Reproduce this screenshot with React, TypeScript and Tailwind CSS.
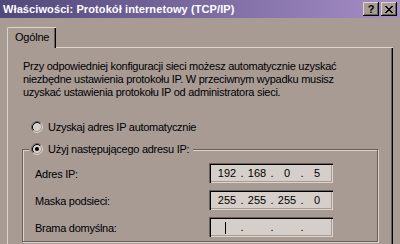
import React from "react";

const FONT = { fontFamily: '"Liberation Sans", Arial, sans-serif' };

function Radio({ checked }: { checked?: boolean }) {
  return (
    <svg width="12" height="12" viewBox="0 0 12 12" className="shrink-0">
      <circle cx="6" cy="6" r="4.5" fill="#d6cec8" />
      <path d="M2.11 9.89 A5.5 5.5 0 0 1 9.89 2.11" stroke="#6b5f59" strokeWidth="1" fill="none" />
      <path d="M9.89 2.11 A5.5 5.5 0 0 1 2.11 9.89" stroke="#dcd4ce" strokeWidth="1" fill="none" />
      <path d="M2.82 9.18 A4.5 4.5 0 0 1 9.18 2.82" stroke="#000" strokeWidth="1" fill="none" />
      <path d="M9.18 2.82 A4.5 4.5 0 0 1 2.82 9.18" stroke="#a89b94" strokeWidth="1" fill="none" />
      {checked && <circle cx="6" cy="6" r="2" fill="#000" />}
    </svg>
  );
}

function IpField({ parts, caret }: { parts: string[]; caret?: boolean }) {
  return (
    <div className="w-[124px] h-[20px] bg-[#d6cec8] shadow-[inset_1px_1px_0_#6b5f59,inset_2px_2px_0_#000,inset_-1px_-1px_0_#dcd4ce,inset_-2px_-2px_0_#a89b94] flex items-center pl-[6px] text-[11px] leading-[13px] text-black pt-[1px] tracking-normal">
      {parts.map((p, i) => (
        <React.Fragment key={i}>
          <span className="w-[24px] text-center">
            {caret && i === 0 ? <span className="inline-block w-px h-[12px] bg-black align-middle ml-[-4px]" /> : p}
          </span>
          {i < 3 && <span className="w-[6px] text-center">.</span>}
        </React.Fragment>
      ))}
    </div>
  );
}

export default function App() {
  return (
    <div className="w-[400px] h-[244px] overflow-hidden bg-[#a89b94] text-black" style={FONT}>
      {/* pasek tytułu */}
      <div className="h-[18px] flex items-center pl-[3px] pr-[3px] bg-gradient-to-r from-[#51487a] to-[#a68ec6]">
        <span className="text-white font-bold text-[11px] leading-[13px] tracking-[0.1px] whitespace-nowrap">
          Właściwości: Protokół internetowy (TCP/IP)
        </span>
        <div className="ml-auto flex gap-[2px]">
          <div className="w-[16px] h-[14px] bg-[#a89b94] shadow-[inset_-1px_-1px_0_#000,inset_1px_1px_0_#dcd4ce,inset_-2px_-2px_0_#6b5f59] flex items-center justify-center text-[11px] font-bold leading-none">
            ?
          </div>
          <div className="w-[16px] h-[14px] bg-[#a89b94] shadow-[inset_-1px_-1px_0_#000,inset_1px_1px_0_#dcd4ce,inset_-2px_-2px_0_#6b5f59] flex items-center justify-center">
            <svg width="8" height="7" viewBox="0 0 8 7" shapeRendering="crispEdges">
              <path d="M0 0h2v1h-2zM6 0h2v1h-2zM1 1h2v1h-2zM5 1h2v1h-2zM2 2h4v1h-4zM3 3h2v1h-2zM2 4h4v1h-4zM1 5h2v1h-2zM5 5h2v1h-2zM0 6h2v1h-2zM6 6h2v1h-2z" fill="#000" />
            </svg>
          </div>
        </div>
      </div>

      <div className="pl-[7px] pr-[7px] pt-[9px]">
        {/* zakładka */}
        <div className="flex">
          <div className="relative z-10 -mb-px w-[49px] h-[21px] bg-[#a89b94] border-l border-t border-[#dcd4ce] rounded-tl-[2px] shadow-[inset_-1px_0_0_#000,inset_-2px_0_0_#6b5f59] pl-[7px] pt-[3px] text-[11px] leading-[13px] tracking-[-0.2px]">
            Ogólne
          </div>
        </div>

        {/* panel */}
        <div className="h-[200px] border-l border-t border-[#dcd4ce] shadow-[inset_-1px_0_0_#000,inset_-2px_0_0_#6b5f59] pl-[14px] pt-[12px] text-[11px] leading-[13px] tracking-[-0.27px]">
          <p className="ml-[1px] whitespace-nowrap">
            Przy odpowiedniej konfiguracji sieci możesz automatycznie uzyskać
            <br />
            niezbędne ustawienia protokołu IP. W przeciwnym wypadku musisz
            <br />
            uzyskać ustawienia protokołu IP od administratora sieci.
          </p>

          <div className="mt-[22px] ml-[9px] h-[12px] flex items-center gap-[5px]">
            <Radio />
            <span>Uzyskaj adres IP automatycznie</span>
          </div>

          {/* ramka grupy */}
          <div className="mt-[16px] w-[356px] h-[93px] border border-[#6b5f59] shadow-[1px_1px_0_#dcd4ce,inset_1px_1px_0_#dcd4ce] flex flex-col">
            <div className="-mt-[7px] ml-[6px] self-start h-[12px] flex items-center gap-[5px] bg-[#a89b94] pl-[2px] pr-[4px]">
              <Radio checked />
              <span>Użyj następującego adresu IP:</span>
            </div>

            <div className="mt-[8px] pl-[12px] grid grid-cols-[174px_124px] gap-y-[6px]">
              <span className="leading-[20px] pt-[1px]">Adres IP:</span>
              <IpField parts={["192", "168", "0", "5"]} />
              <span className="leading-[20px] pt-[1px]">Maska podsieci:</span>
              <IpField parts={["255", "255", "255", "0"]} />
              <span className="leading-[20px] pt-[1px]">Brama domyślna:</span>
              <IpField parts={["", "", "", ""]} caret />
            </div>
          </div>
        </div>
      </div>
    </div>
  );
}
